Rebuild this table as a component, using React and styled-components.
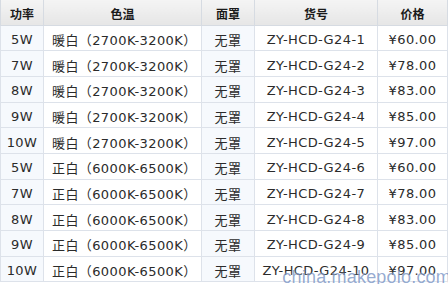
import React from "react"
import styled, { createGlobalStyle } from "styled-components"

const GlobalStyle = createGlobalStyle`
    html, body {
        margin: 0;
        padding: 0;
        background: #ffffff;
    }
`

const Frame = styled.div`
    position: relative;
    width: 448px;
    height: 284px;
    overflow: hidden;
    font-family: "DejaVu Sans", "Noto Sans CJK SC", sans-serif;
    font-size: 13px;
    letter-spacing: 0.4px;
    color: #2b2b2b;
`

const Table = styled.table`
    width: 447px;
    border-collapse: collapse;
    table-layout: fixed;
`

const Head = styled.th`
    height: 25px;
    box-sizing: border-box;
    padding: 2px 0 0;
    font-size: 12px;
    font-weight: bold;
    letter-spacing: 0;
    color: #1a1a1a;
    text-align: center;
    background: linear-gradient(#f4f4f4, #e6e6e6);
    border: 1px solid #d6dbe2;
    border-top: none;
`

const Cell = styled.td`
    height: 25.7px;
    box-sizing: border-box;
    padding: ${p => (p.$left ? "3px 0 0 8px" : "3px 0 0")};
    text-align: ${p => (p.$left ? "left" : "center")};
    white-space: nowrap;
    background: ${p => (p.$tint ? "#f6f9fd" : "#ffffff")};
    border: 1px solid #dde2ea;
`

const Watermark = styled.div`
    position: absolute;
    right: -3px;
    bottom: -4px;
    font-family: "Liberation Sans", "DejaVu Sans", sans-serif;
    font-size: 18px;
    letter-spacing: 0.2px;
    color: rgba(60, 100, 170, 0.55);
    text-shadow: 0 0 2px rgba(255, 255, 255, 0.9);
    pointer-events: none;
`

const rows = [
    ["5W", "暖白（2700K-3200K）", "ZY-HCD-G24-1", "¥60.00"],
    ["7W", "暖白（2700K-3200K）", "ZY-HCD-G24-2", "¥78.00"],
    ["8W", "暖白（2700K-3200K）", "ZY-HCD-G24-3", "¥83.00"],
    ["9W", "暖白（2700K-3200K）", "ZY-HCD-G24-4", "¥85.00"],
    ["10W", "暖白（2700K-3200K）", "ZY-HCD-G24-5", "¥97.00"],
    ["5W", "正白（6000K-6500K）", "ZY-HCD-G24-6", "¥60.00"],
    ["7W", "正白（6000K-6500K）", "ZY-HCD-G24-7", "¥78.00"],
    ["8W", "正白（6000K-6500K）", "ZY-HCD-G24-8", "¥83.00"],
    ["9W", "正白（6000K-6500K）", "ZY-HCD-G24-9", "¥85.00"],
    ["10W", "正白（6000K-6500K）", "ZY-HCD-G24-10", "¥97.00"],
]

const App = () => (
    <Frame>
        <GlobalStyle />
        <Table>
            <colgroup>
                <col style={{ width: 43 }} />
                <col style={{ width: 158 }} />
                <col style={{ width: 53 }} />
                <col style={{ width: 123 }} />
                <col style={{ width: 70 }} />
            </colgroup>
            <thead>
                <tr>
                    <Head>功率</Head>
                    <Head>色温</Head>
                    <Head>面罩</Head>
                    <Head>货号</Head>
                    <Head>价格</Head>
                </tr>
            </thead>
            <tbody>
                {rows.map(([power, temp, code, price]) => (
                    <tr key={code}>
                        <Cell $tint>{power}</Cell>
                        <Cell $left>{temp}</Cell>
                        <Cell $tint>无罩</Cell>
                        <Cell>{code}</Cell>
                        <Cell>{price}</Cell>
                    </tr>
                ))}
            </tbody>
        </Table>
        <Watermark>china.makepolo.com</Watermark>
    </Frame>
)

export default App
